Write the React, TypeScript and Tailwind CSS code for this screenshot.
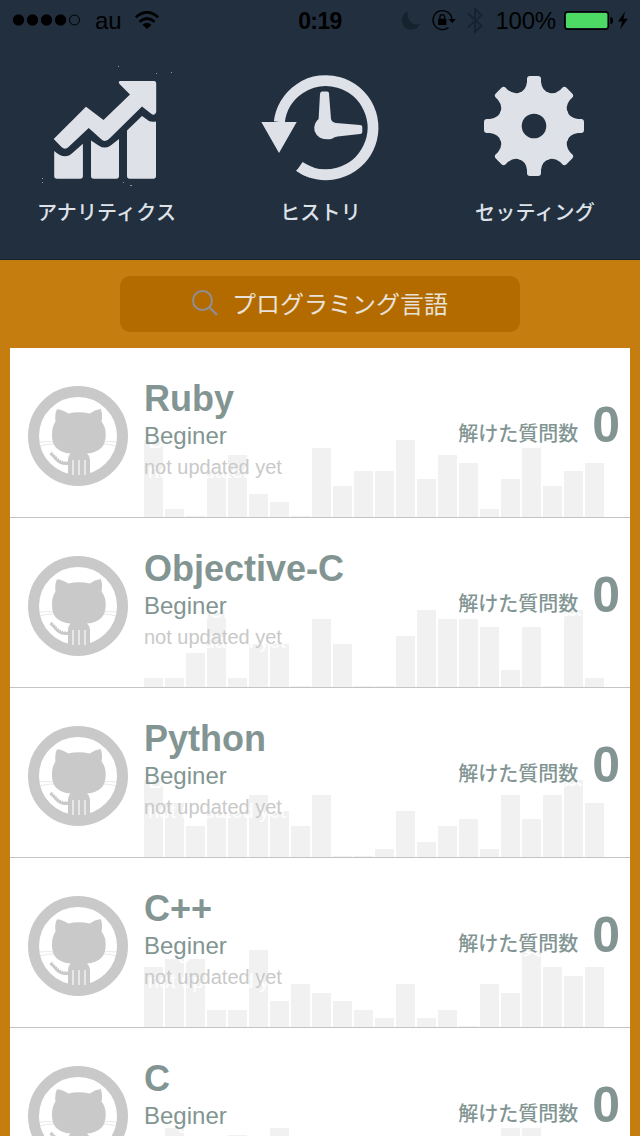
type Course = { name: string; unit: number; bars: number[] };

const COURSES: Course[] = [
  { name: "Ruby", unit: 7.7, bars: [10, 1, 0, 6, 8, 3, 2, 0, 9, 4, 6, 6, 10, 5, 8, 7, 1, 5, 9, 4, 6, 7] },
  { name: "Objective-C", unit: 8.56, bars: [1, 1, 4, 9, 1, 5, 5, 0, 8, 5, 0, 0, 6, 9, 8, 8, 7, 2, 7, 0, 9, 1] },
  { name: "Python", unit: 7.7, bars: [10, 7, 4, 6, 6, 8, 6, 4, 8, 0, 0, 1, 6, 2, 4, 5, 1, 8, 5, 8, 10, 7] },
  { name: "C++", unit: 8.56, bars: [7, 8, 8, 2, 2, 9, 3, 5, 4, 3, 2, 1, 5, 1, 2, 0, 5, 4, 9, 7, 6, 7] },
  { name: "C", unit: 7.7, bars: [4, 9, 3, 5, 8, 2, 9, 1, 4, 6, 2, 5, 7, 3, 6, 1, 4, 9, 9, 2, 5, 3] },
];

const LATIN = "font-['Liberation_Sans','Noto_Sans_CJK_JP',sans-serif]";
const JP = "font-['Noto_Sans_CJK_JP',sans-serif]";
const HALO = "[text-shadow:4px_4px_0_#fff]";

function StatusBar() {
  return (
    <div className="grid h-10 grid-cols-3 items-center text-[24px] leading-none text-black">
      <div className="flex items-center pl-3">
        <svg width="70" height="14" viewBox="0 0 70 14">
          {[6.5, 20.5, 34.5, 48.5].map((x) => (
            <circle key={x} cx={x} cy="7" r="5.7" />
          ))}
          <circle cx="62.5" cy="7" r="5" fill="none" stroke="black" />
        </svg>
        <span className="ml-[13px] pt-0.5">au</span>
        <svg className="ml-[12px]" width="26" height="20" viewBox="0 0 26 20">
          <path d="M13 19 8.5 14.7Q13 11 17.5 14.7Z" />
          <g fill="none" stroke="black" strokeWidth="2.7">
            <path d="M5.5 11.7Q13 5.3 20.5 11.7" />
            <path d="M1.8 7.3Q13-2.5 24.2 7.3" />
          </g>
        </svg>
      </div>
      <div className="pt-0.5 text-center text-[23px] font-bold tracking-[-0.6px]">0:19</div>
      <div className="flex items-center justify-end pr-[11px]">
        <svg className="shrink-0" width="92" height="28" viewBox="400 6 92 28">
          <path d="M409.500 11a9.600 9.600 0 1 0 11.800 12.800A9.500 9.500 0 0 1 409.500 11Z" fill="#17222f" />
          <path d="M453 19.500A9.500 9.500 0 1 0 449.500 27.500" fill="none" stroke="black" strokeWidth="1.3" />
          <path d="M449.500 19h7.400l-3.700 4Z" />
          <rect x="439.200" y="18.700" width="8.200" height="6.400" rx=".7" />
          <path d="M440.900 19v-2a2.400 2.400 0 0 1 4.800 0v2" fill="none" stroke="black" strokeWidth="1.300" />
          <path d="m469 13.500 13.500 12-6.500 6.500V8.800l6.500 6.500-13.500 12" fill="none" stroke="#17222f" strokeWidth="1.800" />
        </svg>
        <span className="ml-[4px] pt-0.5 tracking-[-0.2px]">100%</span>
        <svg className="ml-2 shrink-0" width="65" height="22" viewBox="564 9 65 22">
          <rect x="564.800" y="11.700" width="43.600" height="17.600" rx="3" fill="none" stroke="black" strokeWidth="1.400" />
          <rect x="566" y="13" width="41.300" height="15" rx="1.500" fill="#4cd964" />
          <path d="M610.300 17q2.700 0 2.700 3.500t-2.700 3.500Z" />
          <path d="m625 11.500-7 10h4.200l-2 7.800 7.600-10.500h-4.300Z" />
        </svg>
      </div>
    </div>
  );
}

function AnalyticsIcon() {
  return (
    <svg width="141" height="124" viewBox="36 64 141 124" fill="#dee2e8">
      <path d="m53.700 139 32.300-32.300 17.500 13.300 26.500-25.500-10.500-10.500q-1.800-3 1-3H154q2.200 0 2.200 2.200V112q-1.500 4.500-5 1.800l-9.200-7.300-32 31.500q-5 5.500-9 1L88.700 128l-20.200 19q-3.500 3.500-7 0Z" />
      <path d="M54.200 151q10.500 9.500 18.500 1.700l10.200-9V176q0 2.800-2.800 2.800H57q-2.800 0-2.800-2.800ZM91 140.500l8 5.200q5.500 3.600 11 .2l9-7V176q0 2.800-2.800 2.800H93.800Q91 178.800 91 176ZM127 130.500l15-14.500 7 5q2.500 1.200 7 .5V176q0 2.800-2.800 2.800h-23.400q-2.800 0-2.800-2.800Z" />
      <path
        d="M130 185h2v1h-2zM42 178h1v1h-1zM42 182h1v1h-1zM118 66h1v1h-1zM156 73h1v1h-1zM171 72h1v1h-1zM123 182h1v1h-1z"
        opacity=".6"
      />
    </svg>
  );
}

function HistoryIcon() {
  return (
    <svg width="125" height="124" viewBox="258 65 125 124" fill="#dee2e8">
      <path d="M279.300 123A47 47 0 1 1 299.500 167.500" fill="none" stroke="#dee2e8" strokeWidth="11" />
      <path d="M261.300 123h35.400L279 154ZM305.500 165l-9.500 6.500q6 4.800 14 7.300v-11.600Z" />
      <path d="M322 92.500h5q2 0 2 2l2 25.500q1 3.500 5 4l24 2q2.300.2 2.300 2v5q0 2-2.300 2l-22.500 2.500q-3 .2-5.500 2.300-6 1.500-12-1-8.500-6-4.700-14.500 1.500-3 3.300-4.300L320 95q.1-2.500 2-2.500Z" />
    </svg>
  );
}

function GearIcon() {
  return (
    <svg width="124" height="124" viewBox="-61 -62 124 124">
      <g fill="#dee2e8">
        <circle r="36" />
        {[0, 45, 90, 135, 180, 225, 270, 315].map((angle) => (
          <path
            key={angle}
            transform={`rotate(${angle})`}
            d="M-15.500-33Q-8-35-7-44V-47Q-7-50-4-50H4Q7-50 7-47V-44Q8-35 15.500-33V-25H-15.500Z"
          />
        ))}
      </g>
      <circle r="12.300" fill="#222f3f" />
    </svg>
  );
}

function Avatar() {
  return (
    <svg className="mt-[7px] ml-[18px] shrink-0" width="100" height="100" viewBox="0 0 100 100">
      <g fill="none" stroke="#e2e2e2" strokeWidth=".8">
        <path d="M11 56q9-1 16 0M11 60q9-2.500 17-2M89 56q-9-1-16 0M89 60q-9-2.500-17-2" />
      </g>
      <circle cx="50" cy="50" r="44.500" fill="none" stroke="#c9c9c9" strokeWidth="11" />
      <path
        d="M29 23q-2.500 5.500-1.500 12.500-3.800 5.500-3.500 14Q24 66 42.500 67.500q-2.500 2.500-2.500 6V92h22V73.500q0-3.500-3-6Q77.500 66 77.700 49.500q.3-8.500-4.200-14 1.500-7-.8-12.500-6 .8-11 4.500-11-2.500-21.500 0-6-4-11.200-4.500Z"
        fill="#c9c9c9"
      />
      <path d="M41 77q-8 1-12-3.500T22.500 67" fill="none" stroke="#c9c9c9" strokeWidth="3.500" />
      <path d="M39 75.500q-6 .5-9.500-3.500T24 67" fill="none" stroke="white" strokeWidth="1.200" strokeDasharray="1 1.500" />
      <path d="M45 74v15M51 74v15M57 74v15" stroke="white" strokeWidth="1.100" />
    </svg>
  );
}

function CourseRow({ name, unit, bars }: Course) {
  return (
    <li className="relative flex h-[170px] items-center border-b border-[#c4c4c4] bg-white">
      <div className="absolute bottom-0 left-[134px] flex items-end gap-[2px]">
        {bars.map((level, i) => (
          <div key={i} className="w-[19px] bg-[#f1f1f1]" style={{ height: Math.max(1, level * unit) }} />
        ))}
      </div>
      <Avatar />
      <div className={`relative ml-4 -mt-[5px] text-[#829593] ${LATIN} ${HALO}`}>
        <h2 className="text-[36px] leading-[42px] font-bold">{name}</h2>
        <p className="text-[24px] leading-8">Beginer</p>
        <p className="text-[20px] leading-[30px] text-[#c9c9c9]">not updated yet</p>
      </div>
      <div className={`relative -mt-[15px] mr-[10px] ml-auto flex items-baseline gap-[14px] font-bold text-[#829593] ${HALO}`}>
        <span className={`relative -top-px text-[20px] font-medium ${JP}`}>解けた質問数</span>
        <span className={`text-[50px] leading-none ${LATIN}`}>0</span>
      </div>
    </li>
  );
}

const MENU = [
  { label: "アナリティクス", Icon: AnalyticsIcon },
  { label: "ヒストリ", Icon: HistoryIcon },
  { label: "セッティング", Icon: GearIcon },
];

export default function App() {
  return (
    <div className={`h-[1136px] w-[640px] overflow-hidden bg-[#c67d10] ${LATIN}`}>
      <header className="h-[260px] border-b border-[#172330] bg-[#222f3f]">
        <StatusBar />
        <nav className="grid grid-cols-[213px_215px_214px] pt-6">
          {MENU.map(({ label, Icon }) => (
            <a key={label} className="flex flex-col items-center">
              <Icon />
              <span className={`mt-2 text-[20px] leading-8 font-medium tracking-[0.2px] text-[#dee2e8] ${JP}`}>{label}</span>
            </a>
          ))}
        </nav>
      </header>
      <div className="flex h-[88px] items-center justify-center">
        <div className="flex h-14 w-[400px] items-center justify-center gap-[14px] rounded-[10px] bg-[#b36b00] pb-[3px]">
          <svg className="mt-px" width="26" height="26" viewBox="0 0 26 26" fill="none" stroke="#8e8e93">
            <circle cx="10.500" cy="10.500" r="9.500" strokeWidth="2" />
            <path d="m17.500 17.500 7.500 7.500" strokeWidth="2.400" />
          </svg>
          <span className={`text-[24px] leading-none text-[#e8e2d8] ${JP}`}>プログラミング言語</span>
        </div>
      </div>
      <ul className="mx-[10px]">
        {COURSES.map((course) => (
          <CourseRow key={course.name} {...course} />
        ))}
      </ul>
    </div>
  );
}
